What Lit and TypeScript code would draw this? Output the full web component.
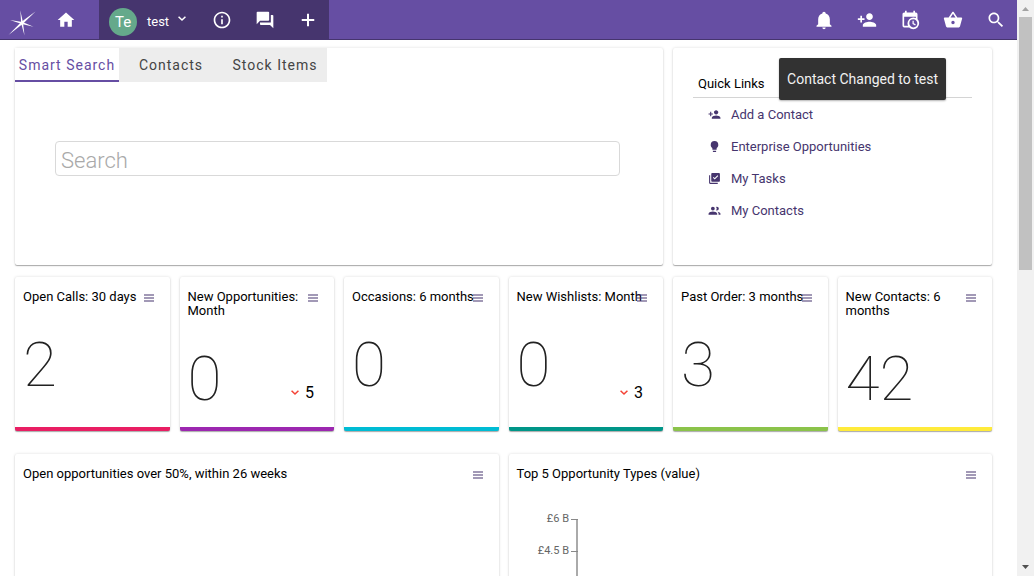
import { LitElement, html, css, svg, nothing } from "lit";
import { customElement, property } from "lit/decorators.js";
import { classMap } from "lit/directives/class-map.js";

const ICONS: Record<string, string> = {
  home: "M10 20v-6h4v6h5v-8h3L12 3 2 12h3v8z",
  info: "M11 7h2v2h-2zm0 4h2v6h-2zm1-9C6.48 2 2 6.48 2 12s4.48 10 10 10 10-4.48 10-10S17.52 2 12 2zm0 18c-4.41 0-8-3.59-8-8s3.59-8 8-8 8 3.59 8 8-3.59 8-8 8z",
  forum: "M21 6h-2v9H6v2c0 .55.45 1 1 1h11l4 4V7c0-.55-.45-1-1-1zm-4 6V3c0-.55-.45-1-1-1H3c-.55 0-1 .45-1 1v14l4-4h10c.55 0 1-.45 1-1z",
  add: "M19.5 13.2h-6.3v6.3h-2.4v-6.3H4.500v-2.400h6.300V4.500h2.400v6.300h6.300z",
  bell: "M21 19v1H3v-1l2-2v-6c0-3.1 2.030-5.830 5-6.710V4a2 2 0 0 1 4 0v.29c2.970.88 5 3.610 5 6.710v6l2 2m-7 2a2 2 0 0 1-4 0z",
  personAdd: "M15 12c2.210 0 4-1.790 4-4s-1.790-4-4-4-4 1.790-4 4 1.790 4 4 4zm-9-2V7H4v3H1v2h3v3h2v-3h3v-2H6zm9 4c-2.670 0-8 1.340-8 4v2h16v-2c0-2.660-5.330-4-8-4z",
  schedule: "M15 13h1.500v2.820l2.440 1.410-.75 1.300L15 16.690V13m4-5H5v11h4.670c-.43-.91-.67-1.930-.67-3a7 7 0 0 1 7-7c1.070 0 2.090.24 3 .67V8M5 21a2 2 0 0 1-2-2V5c0-1.110.89-2 2-2h1V1h2v2h8V1h2v2h1a2 2 0 0 1 2 2v6.100c1.240 1.260 2 2.990 2 4.900a7 7 0 0 1-7 7c-1.910 0-3.640-.76-4.900-2H5m11-9.850A4.850 4.850 0 0 0 11.150 16c0 2.680 2.170 4.850 4.850 4.850A4.850 4.850 0 0 0 20.850 16c0-2.680-2.170-4.850-4.850-4.850z",
  basket: "M17.210 9l-4.380-6.560c-.19-.28-.51-.42-.83-.42-.32 0-.64.14-.83.43L6.790 9H2c-.55 0-1 .45-1 1 0 .09.01.18.04.27l2.540 9.270c.23.84 1 1.460 1.920 1.460h13c.92 0 1.690-.62 1.930-1.460l2.540-9.270L23 10c0-.55-.45-1-1-1h-4.790zM9 9l3-4.400L15 9H9zm3 8c-1.100 0-2-.9-2-2s.9-2 2-2 2 .9 2 2-.9 2-2 2z",
  search: "M15.500 14h-.79l-.28-.27C15.410 12.590 16 11.110 16 9.500 16 5.910 13.090 3 9.500 3S3 5.910 3 9.500 5.910 16 9.500 16c1.610 0 3.090-.59 4.230-1.570l.27.28v.79l5 4.990L20.490 19l-4.990-5zm-6 0C7.010 14 5 11.990 5 9.500S7.010 5 9.500 5 14 7.010 14 9.500 11.990 14 9.500 14z",
  chevron: "M12 17 2.500 8 5 5.500l7 6.500 7-6.500L21.500 8z",
  bulb: "M12 2a7 7 0 0 0-7 7c0 2.380 1.190 4.470 3 5.740V17a1 1 0 0 0 1 1h6a1 1 0 0 0 1-1v-2.260c1.810-1.270 3-3.360 3-5.740a7 7 0 0 0-7-7M9 21a1 1 0 0 0 1 1h4a1 1 0 0 0 1-1v-1H9z",
  tasks: "M20 2H8c-1.100 0-2 .9-2 2v12c0 1.100.9 2 2 2h12c1.100 0 2-.9 2-2V4c0-1.100-.9-2-2-2zm-7.530 12L9 10.500l1.400-1.410 2.070 2.080L17.600 6 19 7.410 12.470 14zM4 20h14v2H4c-1.100 0-2-.9-2-2V6h2v14z",
  group: "M16.500 12A3.500 3.500 0 0 0 16.500 5c-.5 0-1 .1-1.500.4A5 5 0 0 1 15 11.600c.5.300 1 .4 1.500.4zM9 12a3.500 3.500 0 1 0 0-7 3.500 3.500 0 0 0 0 7zm0 2c-2.670 0-8 1.340-8 4v2h16v-2c0-2.660-5.330-4-8-4zm8.500.1c1.200.9 2 2.100 2 3.900v2H23v-2c0-2-2.700-3.400-5.500-3.900z",
};

@customElement("ui-icon")
export class UiIcon extends LitElement {
  @property() name = "";

  static styles = css`
    :host {
      display: block;
      width: 20px;
      height: 20px;
    }
    .glyph {
      display: block;
      width: 100%;
      height: 100%;
      fill: currentColor;
    }
  `;

  render() {
    return html`<svg class="glyph" viewBox="0 0 24 24" aria-hidden="true">
      <path d=${ICONS[this.name] ?? ""}></path>
    </svg>`;
  }
}

@customElement("dash-card")
export class DashCard extends LitElement {
  @property() heading = "";
  @property() accent = "";

  static styles = css`
    :host {
      display: block;
    }
    .card {
      position: relative;
      box-sizing: border-box;
      height: 100%;
      display: flex;
      flex-direction: column;
      padding: 13px 20px 0 8px;
      background: #fff;
      border-radius: 2px;
      box-shadow: 0 1px 1px rgba(0, 0, 0, 0.3), 0 0 3px rgba(0, 0, 0, 0.14);
      overflow: hidden;
    }
    .title {
      margin: 0;
      font-size: 13px;
      line-height: 14px;
      font-weight: 400;
      color: #000;
    }
    .menu {
      position: absolute;
      top: 13px;
      right: 12px;
      padding: 4px;
      border: 0;
      background: none;
      color: #46356e;
    }
    .bars {
      display: block;
    }
    .body {
      flex: 1;
      display: flex;
      flex-direction: column;
    }
    .pink { border-bottom: 4px solid #e91e63; }
    .purple { border-bottom: 4px solid #9c27b0; }
    .cyan { border-bottom: 4px solid #00bcd4; }
    .teal { border-bottom: 4px solid #009688; }
    .green { border-bottom: 4px solid #8bc34a; }
    .yellow { border-bottom: 4px solid #ffeb3b; }
  `;

  render() {
    return html`<section
      class=${classMap({ card: true, [this.accent || "plain"]: true })}
    >
      <h2 class="title">${this.heading}</h2>
      <button class="menu" aria-label="Open menu">
        <svg class="bars" width="10" height="8" aria-hidden="true">
          <path d="M0 1h10M0 4h10M0 7h10" stroke="currentColor" stroke-width="1.200"></path>
        </svg>
      </button>
      <div class="body"><slot></slot></div>
    </section>`;
  }
}

interface Metric {
  title: string;
  value: string;
  accent: string;
  drop?: string;
}

const METRICS: Metric[] = [
  { title: "Open Calls: 30 days", value: "2", accent: "pink" },
  { title: "New Opportunities: Month", value: "0", accent: "purple", drop: "5" },
  { title: "Occasions: 6 months", value: "0", accent: "cyan" },
  { title: "New Wishlists: Month", value: "0", accent: "teal", drop: "3" },
  { title: "Past Order: 3 months", value: "3", accent: "green" },
  { title: "New Contacts: 6 months", value: "42", accent: "yellow" },
];

const LINKS = [
  { icon: "personAdd", label: "Add a Contact" },
  { icon: "bulb", label: "Enterprise Opportunities" },
  { icon: "tasks", label: "My Tasks" },
  { icon: "group", label: "My Contacts" },
];

const TICKS = ["£6 B", "£4.5 B"];

@customElement("app-root")
export class AppRoot extends LitElement {
  static styles = css`
    :host {
      display: grid;
      grid-template-columns: minmax(0, 1fr) 17px;
      height: 100vh;
      overflow: hidden;
      background: #fff;
      color: #000;
      font-family: Roboto, "Liberation Sans", sans-serif;
      font-size: 13px;
    }
    button {
      font: inherit;
      border: 0;
      padding: 0;
      background: none;
      color: inherit;
    }
    .page {
      min-width: 0;
      overflow: hidden;
    }
    .bar {
      display: flex;
      height: 39px;
      background: #664ea3;
      border-bottom: 1px solid #46356e;
      color: #fff;
    }
    .logo {
      display: block;
      width: 44px;
      height: 39px;
    }
    .tool {
      width: 43px;
      display: grid;
      place-items: center;
      color: #fff;
    }
    .context {
      display: flex;
      margin-left: 12px;
      background: #46356e;
    }
    .contact {
      display: flex;
      align-items: center;
      gap: 8px;
      padding: 4px 13px 0 10px;
    }
    .name {
      padding-left: 2px;
    }
    .avatar {
      width: 28px;
      height: 28px;
      border-radius: 50%;
      display: grid;
      place-items: center;
      background: #65a98b;
      font-size: 15px;
    }
    .caret {
      width: 10px;
      height: 10px;
      margin-bottom: 5px;
    }
    .actions {
      display: flex;
      margin-left: auto;
    }
    .board {
      display: grid;
      grid-template-columns: repeat(6, minmax(0, 1fr));
      column-gap: 10px;
      padding: 8px 25px 0 15px;
    }
    .panel {
      box-sizing: border-box;
      min-height: 217px;
      margin-bottom: 12px;
      border-radius: 2px;
      box-shadow: 0 1px 1px rgba(0, 0, 0, 0.3), 0 0 3px rgba(0, 0, 0, 0.14);
    }
    .finder {
      grid-column: span 4;
    }
    .tabs {
      display: inline-grid;
      grid-template-columns: repeat(3, 104px);
      vertical-align: top;
    }
    .tab {
      height: 34px;
      padding-top: 1px;
      background: #ededed;
      color: #444;
      font-size: 14px;
      letter-spacing: 1px;
      white-space: nowrap;
      border-bottom: 2px solid #ededed;
    }
    .current {
      background: #fff;
      color: #664ea3;
      border-color: #664ea3;
    }
    .query {
      padding: 59px 43px 0 40px;
    }
    .field {
      display: block;
      box-sizing: border-box;
      width: 100%;
      height: 35px;
      padding: 3px 5px 0;
      border: 1px solid #d9d9d9;
      border-radius: 4px;
      font: 300 22px Roboto, "Liberation Sans", sans-serif;
      color: #444;
      background: #fff;
    }
    .field::placeholder {
      color: #a9a9a9;
      opacity: 1;
    }
    .quick {
      grid-column: span 2;
      padding: 23px 20px 0;
    }
    .quick-title {
      margin: 0;
      padding: 0 5px;
      font-size: 13px;
      line-height: 26px;
      font-weight: 400;
      border-bottom: 1px solid #d4d4d4;
    }
    .links {
      margin: 0;
      padding: 0 0 0 15px;
      list-style: none;
    }
    .link {
      display: flex;
      align-items: center;
      gap: 10px;
      height: 32px;
      color: #46356e;
      text-decoration: none;
    }
    .link-icon {
      width: 13px;
      height: 13px;
    }
    .metric {
      min-height: 154px;
      margin-bottom: 23px;
    }
    .reading {
      flex: 1;
      display: flex;
      justify-content: space-between;
    }
    .value {
      margin-top: 30px;
      font-size: 62px;
      line-height: 62px;
      font-weight: 100;
      color: #222;
    }
    .drop {
      align-self: flex-end;
      display: flex;
      align-items: center;
      gap: 5px;
      margin-bottom: 24px;
      font-size: 16px;
      line-height: 20px;
    }
    .drop-icon {
      width: 10px;
      height: 10px;
      color: #f44336;
    }
    .chart {
      grid-column: span 3;
      min-height: 220px;
    }
    .axis {
      display: block;
      width: 100%;
      height: 160px;
      margin-top: 26px;
    }
    .tick {
      font-size: 11px;
      fill: #666;
      text-anchor: end;
    }
    .rule {
      stroke: #888;
      fill: none;
    }
    .spine {
      stroke: #aaa;
      stroke-width: 2px;
    }
    .toast {
      position: absolute;
      top: 58px;
      right: 88px;
      padding: 0 8px;
      border-radius: 2px;
      background: #323232;
      color: #f1f1f1;
      font-size: 14px;
      line-height: 42px;
      box-shadow: 0 1px 2px rgba(0, 0, 0, 0.3);
      white-space: nowrap;
    }
    .scroll {
      display: flex;
      flex-direction: column;
      align-items: center;
      background: #f1f1f1;
    }
    .thumb {
      width: 13px;
      height: 44%;
      background: #c1c1c1;
    }
    .arrow {
      display: block;
      width: 17px;
      height: 17px;
    }
    .down {
      margin-top: auto;
    }
  `;

  private tool(icon: string, label: string) {
    return html`<button class="tool" aria-label=${label}>
      <ui-icon name=${icon}></ui-icon>
    </button>`;
  }

  private header() {
    return html`<header class="bar">
      <svg class="logo" viewBox="0 0 44 39" fill="#fff" role="img" aria-label="Star">
        <path d="M20.300 10.500L23 22.500 24.500 35.500 21.200 23.500z"></path>
        <path d="M35.500 11.500L23.200 23.600 8.500 35 21.200 22z"></path>
        <path d="M10 20L22.500 22 33.500 26.700 21.800 24z"></path>
        <circle cx="22.200" cy="22.900" r="1.500"></circle>
      </svg>
      ${this.tool("home", "Home")}
      <div class="context">
        <button class="contact">
          <span class="avatar">Te</span>
          <span class="name">test</span>
          <ui-icon class="caret" name="chevron"></ui-icon>
        </button>
        ${this.tool("info", "Details")} ${this.tool("forum", "Messages")}
        ${this.tool("add", "Add")}
      </div>
      <nav class="actions" aria-label="Tools">
        ${this.tool("bell", "Notifications")}
        ${this.tool("personAdd", "Add contact")}
        ${this.tool("schedule", "Schedule")} ${this.tool("basket", "Basket")}
        ${this.tool("search", "Search")}
      </nav>
    </header>`;
  }

  private metric(m: Metric) {
    return html`<dash-card class="metric" heading=${m.title} accent=${m.accent}>
      <div class="reading">
        <span class="value">${m.value}</span>
        ${m.drop
          ? html`<span class="drop">
              <ui-icon class="drop-icon" name="chevron"></ui-icon>${m.drop}
            </span>`
          : nothing}
      </div>
    </dash-card>`;
  }

  render() {
    return html`
      <div class="page">
        ${this.header()}
        <main class="board">
          <section class="panel finder">
            <div class="tabs" role="tablist">
              <button class="tab current" role="tab" aria-selected="true">Smart Search</button>
              <button class="tab" role="tab" aria-selected="false">Contacts</button>
              <button class="tab" role="tab" aria-selected="false">Stock Items</button>
            </div>
            <div class="query">
              <input class="field" type="search" placeholder="Search" aria-label="Search" />
            </div>
          </section>
          <section class="panel quick">
            <h2 class="quick-title">Quick Links</h2>
            <ul class="links">
              ${LINKS.map(
                (l) => html`<li>
                  <a class="link" href="#">
                    <ui-icon class="link-icon" name=${l.icon}></ui-icon>${l.label}
                  </a>
                </li>`
              )}
            </ul>
          </section>
          ${METRICS.map((m) => this.metric(m))}
          <dash-card class="chart" heading="Open opportunities over 50%, within 26 weeks"></dash-card>
          <dash-card class="chart" heading="Top 5 Opportunity Types (value)">
            <svg class="axis" aria-hidden="true">
              <path class="rule spine" d="M60 12v148"></path>
              ${TICKS.map(
                (t, i) => svg`
                  <path class="rule" d=${`M54 ${12.5 + i * 32}h7`}></path>
                  <text class="tick" x="52" y=${15 + i * 32}>${t}</text>`
              )}
            </svg>
          </dash-card>
        </main>
      </div>
      <div class="scroll" aria-hidden="true">
        <svg class="arrow"><path d="M5 11h7L8.500 7z" fill="#a3a3a3"></path></svg>
        <div class="thumb"></div>
        <svg class="arrow down"><path d="M5 6h7L8.500 10z" fill="#505050"></path></svg>
      </div>
      <div class="toast" role="status">Contact Changed to test</div>
    `;
  }
}
